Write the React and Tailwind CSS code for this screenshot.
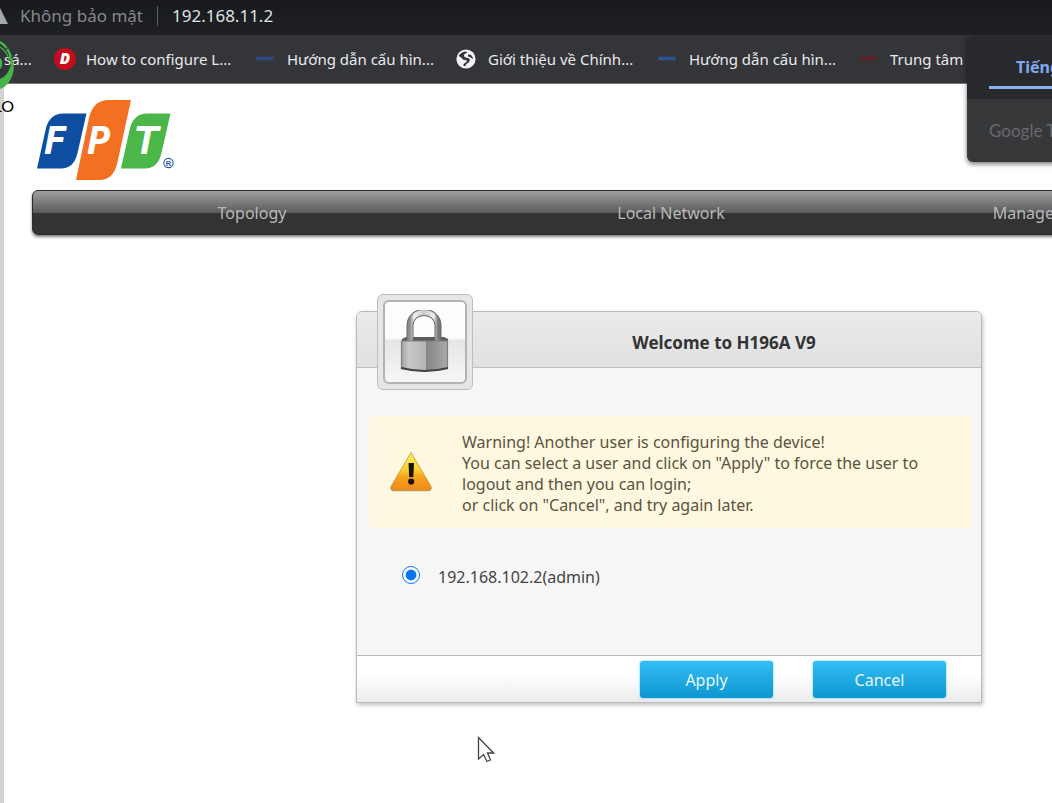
import React from "react";

function GlobeIcon() {
  return (
    <svg viewBox="0 0 20 20" className="size-5" aria-hidden="true">
      <circle cx="10" cy="10" r="9.6" fill="#f1f3f4" />
      <path d="M2.6 7C4 4.600 6.600 2.800 9.600 2.600L11.400 3.600 8.200 5.200 8 7.200 9.600 8.600 12.800 9.200 14 11 12.800 13.600 10.400 15 9.200 17.200 7.200 16.800 7.800 14.800 10.200 13.200 11 11.600 6.800 10.600 5.200 8.400Z" fill="#35363a" />
      <path d="M12 5.600 14.800 5.800 16.600 8 16.900 10 14.600 8.600 12.200 7.600Z" fill="#35363a" />
    </svg>
  );
}

function RedDIcon() {
  return (
    <svg viewBox="0 0 22 22" className="size-[22px]" aria-hidden="true">
      <circle cx="11" cy="11" r="11" fill="#c30d1d" />
      <text x="11" y="16" textAnchor="middle" fontFamily="Open Sans, sans-serif" fontWeight="800" fontStyle="italic" fontSize="15" fill="#fff">D</text>
    </svg>
  );
}

function DashIcon({ color }) {
  return (
    <svg viewBox="0 0 20 20" className="size-5" aria-hidden="true">
      <path d="M1 9.500h18" stroke={color} strokeWidth="4" opacity="0.55" />
      <path d="M2 9.500h16" stroke={color} strokeWidth="1.5" strokeDasharray="3 1" />
    </svg>
  );
}

const bookmarks = [
  { label: "How to configure L...", icon: <RedDIcon /> },
  { label: "Hướng dẫn cấu hìn...", icon: <DashIcon color="#2f5496" /> },
  { label: "Giới thiệu về Chính...", icon: <GlobeIcon /> },
  { label: "Hướng dẫn cấu hìn...", icon: <DashIcon color="#2a5ea8" /> },
  { label: "Trung tâm V...", icon: <DashIcon color="#6e1a22" /> },
];

function AddressBar() {
  return (
    <div className="flex h-[35px] items-center bg-linear-to-b from-[#191a1d] to-[#1f2023] pb-1 text-[17px] leading-6">
      <svg viewBox="0 0 8 16" className="mr-3 h-4 w-2 shrink-0" aria-hidden="true">
        <path d="M0 0 8 16H0Z" fill="#a4a7ab" />
      </svg>
      <span className="text-[#85898d]">Không bảo mật</span>
      <span className="mx-[14px] h-5 w-px bg-[#5c5f63]" />
      <span className="text-[#dfe1e5]">192.168.11.2</span>
    </div>
  );
}

function BookmarksBar() {
  return (
    <nav className="flex h-[49px] items-center overflow-hidden border-b border-[#77787b] bg-[#343539] text-[15px] leading-6 whitespace-nowrap text-[#e8eaed]">
      <a href="#" className="flex w-[54px] shrink-0 pl-1">sá...</a>
      {bookmarks.map((b, i) => (
        <a key={i} href="#" className="flex w-[201px] shrink-0 items-center gap-2">
          <span className="flex w-6 shrink-0">{b.icon}</span>
          {b.label}
        </a>
      ))}
    </nav>
  );
}

function Watermark() {
  return (
    <div className="pointer-events-none absolute top-9 left-0 h-20 w-5 overflow-hidden">
      <svg viewBox="0 0 16 56" className="absolute top-0 left-0 h-14 w-4" aria-hidden="true">
        <path d="M0 6C7 10 11 18 12 27 13 36 8 46 0 51" fill="none" stroke="#45b549" strokeWidth="2.500" strokeDasharray="9 1" />
        <path d="M0 43C5 41 9 36 11 29L14 31C13 43 7 51 0 53Z" fill="#45b549" />
        <path d="M0 11C5 14 8 19 9 24" fill="none" stroke="#45b549" strokeWidth="1.2" />
        <path d="M0 22C3 24 3 31 0 33Z" fill="#45b549" />
      </svg>
      <span className="absolute right-[6px] bottom-0 font-['Lato',sans-serif] text-base leading-5 text-black">LO</span>
    </div>
  );
}

function TranslatePopup() {
  return (
    <aside className="absolute top-9 left-[967px] h-[126px] w-[340px] rounded-md bg-[#37383a] shadow-[0_2px_5px_rgba(0,0,0,0.55)]">
      <div className="flex h-[63px] items-end rounded-t-md bg-[#28292c] px-[22px] pb-[10px]">
        <button type="button" className="border-b-[3px] border-[#8fb0ee] px-[27px] pb-[7px] text-base leading-6 font-bold text-[#82a9f0]">
          Tiếng Anh
        </button>
      </div>
      <p className="px-[22px] pt-5 font-['Lato',sans-serif] text-[17px] leading-6 text-[#67696c]">Google Translate</p>
    </aside>
  );
}

function FptLogo() {
  return (
    <svg viewBox="0 0 138 82" className="h-[82px] w-[138px]" role="img" aria-label="FPT">
      <path d="M0 68.500L9 28Q13 13.500 26 13.500H49.500L40.500 53Q37 68.500 24 68.500Z" fill="#0d4ea2" />
      <path d="M39 80 52 18Q56 0 72 0H94L80.500 62Q77 80 62 80Z" fill="#f36f21" />
      <path d="M84 68.500 93 28Q97 13.500 110 13.500H133.500L124.500 53Q121 68.500 108 68.500Z" fill="#4bb748" />
      <g fill="#fff" stroke="#fff" strokeWidth="2.200" strokeLinejoin="round" fontFamily="DejaVu Sans, sans-serif" fontStyle="italic" fontSize="35">
        <text x="8" y="53">F</text>
        <text x="51" y="53">P</text>
        <text x="99" y="53">T</text>
      </g>
      <circle cx="131.500" cy="63" r="4.600" fill="none" stroke="#2a5aa8" strokeWidth="1.100" />
      <text x="131.500" y="65.800" textAnchor="middle" fontFamily="Liberation Sans, sans-serif" fontWeight="700" fontSize="7.500" fill="#2a5aa8">R</text>
    </svg>
  );
}

function PadlockIcon() {
  return (
    <svg viewBox="0 0 50 64" className="h-16 w-[50px]" aria-hidden="true">
      <defs>
        <linearGradient id="shackle" x1="0" x2="1">
          <stop offset="0" stopColor="#8c8c8c" />
          <stop offset="0.15" stopColor="#f0f0f0" />
          <stop offset="0.5" stopColor="#c9c9c9" />
          <stop offset="0.85" stopColor="#ededed" />
          <stop offset="1" stopColor="#777" />
        </linearGradient>
        <linearGradient id="left" x1="0" x2="1">
          <stop offset="0" stopColor="#a2a2a2" />
          <stop offset="0.3" stopColor="#c9c9c9" />
          <stop offset="1" stopColor="#b3b3b3" />
        </linearGradient>
        <linearGradient id="right" x1="0" x2="1">
          <stop offset="0" stopColor="#858585" />
          <stop offset="1" stopColor="#aaa" />
        </linearGradient>
      </defs>
      <path d="M2 29 6 27H44L48 29V34H2Z" fill="#5d5d5d" />
      <path d="M10 31V16C10 -2 38 -2 38 16V31" fill="none" stroke="#666" strokeWidth="7" />
      <path d="M10 31V16C10 -2 38 -2 38 16V31" fill="none" stroke="url(#shackle)" strokeWidth="5" />
      <path d="M1.500 31H26V61C17 61 7 61 1.500 58Z" fill="url(#left)" />
      <path d="M26 31H47.500V58C43 61 35 61 26 61Z" fill="url(#right)" />
      <path d="M1.500 31H47.500V58Q25 64 1.500 58Z" fill="none" stroke="#808080" strokeWidth="1.200" />
      <path d="M1 58Q25 64 48 58" fill="none" stroke="#444" strokeWidth="2" />
    </svg>
  );
}

function WarningIcon() {
  return (
    <svg viewBox="0 0 44 42" className="h-[42px] w-11 shrink-0" aria-hidden="true">
      <defs>
        <linearGradient id="amber" x1="0" x2="0" y1="0" y2="1">
          <stop offset="0" stopColor="#fff46a" />
          <stop offset="0.45" stopColor="#fbd02d" />
          <stop offset="0.65" stopColor="#f6a21f" />
          <stop offset="1" stopColor="#ee8a1a" />
        </linearGradient>
      </defs>
      <path d="M22 2 42 36Q43.500 40 39.500 40.300H4.500Q0.500 40 2 36Z" fill="#8a6a3a" opacity="0.6" />
      <path d="M22 1.500 42 35.500Q43 39 39.500 39.200H4.500Q1 39 2 35.500Z" fill="url(#amber)" stroke="#c9943a" strokeWidth="0.800" strokeLinejoin="round" />
      <path d="M19.500 12H25L24.300 26H20.200Z" fill="#15120a" />
      <circle cx="22.200" cy="30.500" r="3.100" fill="#15120a" />
    </svg>
  );
}

function LoginDialog() {
  const button =
    "h-[37px] w-[133px] rounded-[3px] bg-linear-to-b from-[#33bdf3] to-[#0797d0] text-base leading-6 text-[#e6f7ff] shadow-[0_0_1px_1px_rgba(120,215,250,0.5)]";
  return (
    <section className="relative mx-auto mt-[76px] w-[626px] rounded-t-md border border-[#b9b9b9] bg-[#f6f6f6] text-base text-[#444] shadow-[1px_2px_4px_rgba(0,0,0,0.25)]">
      <header className="flex h-14 items-center justify-center rounded-t-md border-b border-[#c0c0c0] bg-linear-to-b from-[#ebebeb] to-[#e0e0e0] pt-[6px] pl-[110px]">
        <h1 className="text-[17px] leading-6 font-bold text-[#333]">Welcome to H196A V9</h1>
      </header>
      <div className="absolute -top-[18px] left-5 rounded-md border border-[#bdbdbd] bg-[#e6e6e6] p-[5px]">
        <div className="flex size-[84px] items-center justify-center rounded-md border-2 border-[#b3b3b3] bg-linear-to-b from-[#fdfdfd] from-45% via-[#e6e6e6] via-48% to-[#f6f6f6]">
          <PadlockIcon />
        </div>
      </div>
      <form onSubmit={(e) => e.preventDefault()}>
        <div className="h-[287px] pt-12 pr-[10px] pl-3">
          <div className="flex h-[112px] items-center rounded-sm bg-[#fff8e1] pl-5 leading-[21px] text-[#5c5340]">
            <WarningIcon />
            <p className="pt-1 pl-[29px]">
              Warning! Another user is configuring the device!
              <br />
              You can select a user and click on "Apply" to force the user to
              <br />
              logout and then you can login;
              <br />
              or click on "Cancel", and try again later.
            </p>
          </div>
          <label className="mt-9 ml-[33px] flex items-start gap-[18px] leading-6">
            <input type="radio" name="session" defaultChecked className="mt-[2px] size-[18px] accent-[#0b74ee]" />
            <span className="pt-px">192.168.102.2(admin)</span>
          </label>
        </div>
        <footer className="flex h-[47px] justify-end gap-10 border-t border-[#b9b9b9] bg-linear-to-b from-white from-40% to-[#ebebeb] pt-[5px] pr-[35px]">
          <button type="submit" className={button}>Apply</button>
          <button type="button" className={button}>Cancel</button>
        </footer>
      </form>
    </section>
  );
}

const menu = ["Topology", "Local Network", "Management & Diagnosis"];

export default function App() {
  return (
    <div className="relative flex min-h-screen flex-col overflow-hidden bg-white font-['Noto_Sans',sans-serif]">
      <AddressBar />
      <BookmarksBar />
      <main className="flex-1 overflow-hidden border-l-4 border-[#d3d3d3] pb-10 pl-7">
        <div className="w-[1274px]">
          <div className="pt-4 pl-[5px]">
            <FptLogo />
          </div>
          <nav className="mt-2 flex h-[45px] items-center justify-center rounded-md border border-[#2c2c2c] bg-linear-to-b from-[#a0a0a0] via-[#5c5c5c] via-50% to-[#333] to-52% pl-1 text-base text-[#b9b9b9] shadow-[0_2px_3px_rgba(0,0,0,0.5)]">
            {menu.map((m) => (
              <a key={m} href="#" className="w-[419px] text-center">{m}</a>
            ))}
          </nav>
          <LoginDialog />
        </div>
      </main>
      <TranslatePopup />
      <Watermark />
      <svg viewBox="0 0 18 28" className="absolute top-[736px] left-[477px] h-7 w-[18px]" aria-hidden="true">
        <path d="M1.500 1.500V23L6.500 18.500 10 25.500 13.500 24 10.500 17H16.500Z" fill="#fff" stroke="#444" strokeWidth="1.300" />
      </svg>
    </div>
  );
}
